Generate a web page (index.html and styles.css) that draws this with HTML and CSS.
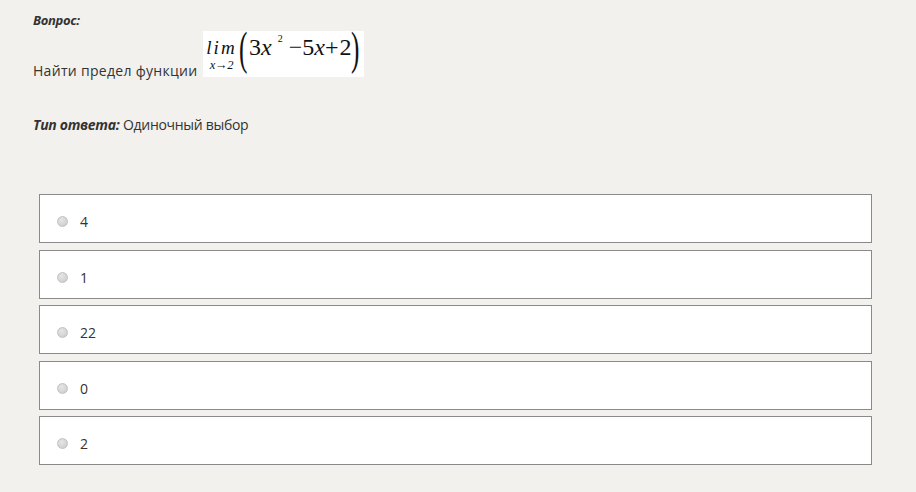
FILE: index.html
```html
<!DOCTYPE html>
<html lang="ru">
<head>
<meta charset="utf-8">
<link rel="stylesheet" href="styles.css">
</head>
<body>
<div class="page">
  <div class="label">Вопрос:</div>
  <p class="question"><span class="q-text">Найти предел функции</span> <span class="formula"><span class="f-row"><span class="lim"><span class="lim-word">lim</span><span class="lim-sub">x→2</span></span><span class="paren open">(</span><span class="expr">3<i>x</i><sup>2</sup><span class="op-minus">−</span>5<i>x</i><span class="op-plus">+</span>2</span><span class="paren">)</span></span></span></p>
  <p class="type"><span class="label-inline">Тип ответа:</span> <span class="type-val">Одиночный выбор</span></p>
  <div class="options">
    <div class="option"><span class="radio"></span><span class="opt-text">4</span></div>
    <div class="option"><span class="radio"></span><span class="opt-text">1</span></div>
    <div class="option"><span class="radio"></span><span class="opt-text">22</span></div>
    <div class="option"><span class="radio"></span><span class="opt-text">0</span></div>
    <div class="option"><span class="radio"></span><span class="opt-text">2</span></div>
  </div>
</div>
</body>
</html>
```
FILE: styles.css
```css
html, body {
  margin: 0;
  padding: 0;
  background: #f2f1ee;
}
body {
  font-family: "Open Sans", "Noto Sans", sans-serif;
  font-size: 13px;
  color: #333;
}
.page {
  padding: 11px 0 0 33px;
  width: 839px;
}
.label {
  font-weight: bold;
  font-style: italic;
  font-size: 13px;
  line-height: 19px;
  letter-spacing: -0.3px;
}
.question {
  margin: 1px 0 0 0;
  font-size: 14px;
  line-height: 20px;
}
.q-text {
  letter-spacing: 0.3px;
}
.formula {
  display: inline-block;
  vertical-align: bottom;
  margin: 0 0 4px 2px;
  background: #fff;
  height: 46px;
  width: 161px;
  font-family: "Liberation Serif", "Times New Roman", serif;
  color: #111;
}
.f-row {
  display: flex;
  align-items: flex-start;
  height: 46px;
  padding-left: 3px;
  white-space: nowrap;
}
.lim {
  display: flex;
  flex-direction: column;
  align-items: center;
  margin-top: 7px;
}
.lim-word {
  font-style: italic;
  font-size: 19px;
  line-height: 20px;
  letter-spacing: 2.2px;
}
.lim-sub {
  font-size: 12.5px;
  line-height: 14px;
  font-style: italic;
  letter-spacing: -0.3px;
}
.paren {
  display: block;
  width: 12px;
  font-size: 42px;
  line-height: 40px;
  transform: scale(0.6, 1.08);
  transform-origin: 0 43px;
}
.paren.open {
  width: 9px;
  margin-left: 2px;
}
.paren + .expr {
  margin-left: 1px;
}
.expr {
  display: block;
  font-size: 24px;
  line-height: 26px;
  margin-top: 3px;
}
.expr i {
  font-style: italic;
}
.expr sup {
  font-size: 10px;
  line-height: 0;
  vertical-align: 13px;
  margin-left: 6px;
}
.op-minus {
  margin: 0 0 0 6px;
}
.op-plus {
  margin: 0 1px 0 0;
}
.type {
  margin: 34px 0 0 0;
  font-size: 14px;
  line-height: 20px;
}
.label-inline {
  font-weight: bold;
  font-style: italic;
  letter-spacing: -0.3px;
}
.type-val {
  letter-spacing: -0.3px;
}
.options {
  margin: 59px 0 0 6px;
  display: flex;
  flex-direction: column;
  gap: 6.5px;
}
.option {
  border: 1px solid #8a8a8a;
  background: #fff;
  display: flex;
  align-items: center;
  padding: 6px 0 0 17px;
  height: 41px;
}
.radio {
  width: 11px;
  height: 11px;
  border-radius: 50%;
  background: radial-gradient(circle at 40% 35%, #e6e6e6, #c8c8c8);
  border: 1px solid #c2c2c2;
  box-sizing: border-box;
  margin-right: 12px;
}
.opt-text {
  font-size: 14px;
  color: #333;
}
```
